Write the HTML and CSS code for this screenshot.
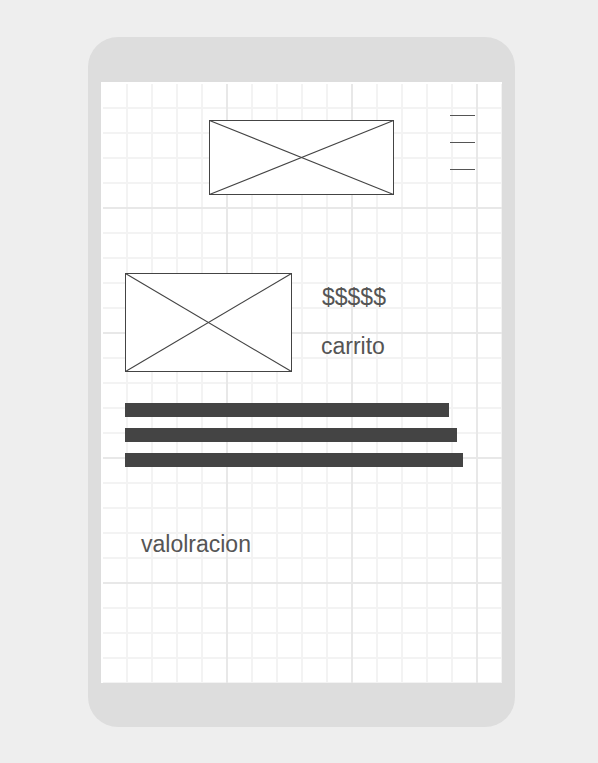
FILE: index.html
```html
<!DOCTYPE html>
<html lang="es">
<head>
<meta charset="utf-8">
<title>Wireframe</title>
<link rel="stylesheet" href="styles.css">
</head>
<body>
<div class="device">
  <div class="screen">
    <div class="header">
      <svg class="ph ph-top" width="185" height="75" viewBox="0 0 185 75">
        <rect x="0.5" y="0.5" width="184" height="74" fill="#fff" stroke="#444" stroke-width="1"/>
        <line x1="0.5" y1="0.5" x2="184.5" y2="74.5" stroke="#444" stroke-width="1.1"/>
        <line x1="0.5" y1="74.5" x2="184.5" y2="0.5" stroke="#444" stroke-width="1.1"/>
      </svg>
      <div class="menu">
        <span class="menu-line"></span>
        <span class="menu-line"></span>
        <span class="menu-line"></span>
      </div>
    </div>
    <div class="product">
      <svg class="ph ph-product" width="167" height="99" viewBox="0 0 167 99">
        <rect x="0.5" y="0.5" width="166" height="98" fill="#fff" stroke="#444" stroke-width="1"/>
        <line x1="0.5" y1="0.5" x2="166.5" y2="98.5" stroke="#444" stroke-width="1.1"/>
        <line x1="0.5" y1="98.5" x2="166.5" y2="0.5" stroke="#444" stroke-width="1.1"/>
      </svg>
      <div class="info">
        <div class="price">$$$$$</div>
        <div class="cart">carrito</div>
      </div>
    </div>
    <div class="bars">
      <div class="bar bar-1"></div>
      <div class="bar bar-2"></div>
      <div class="bar bar-3"></div>
    </div>
    <div class="rating">valolracion</div>
  </div>
</div>
</body>
</html>
```
FILE: styles.css
```css
html, body {
  margin: 0;
  padding: 0;
}
body {
  background: #eeeeee;
  font-family: "Liberation Sans", Arial, sans-serif;
  width: 598px;
  height: 763px;
  overflow: hidden;
}
.device {
  margin: 37px 0 0 88px;
  width: 427px;
  height: 690px;
  box-sizing: border-box;
  padding: 45px 13px 44px 13px;
  background: #dddddd;
  border-radius: 30px;
}
.screen {
  width: 401px;
  height: 601px;
  box-sizing: border-box;
  background-color: #ffffff;
  background-image:
    linear-gradient(to right, #e8e8e8 2px, transparent 2px),
    linear-gradient(to bottom, #e8e8e8 2px, transparent 2px),
    linear-gradient(to right, #f3f3f3 2px, transparent 2px),
    linear-gradient(to bottom, #f3f3f3 2px, transparent 2px);
  background-size: 125px 125px, 125px 125px, 25px 25px, 25px 25px;
  background-position: 0 0;
  box-shadow: inset 2px 2px 0 #ffffff;
  overflow: hidden;
}
.ph {
  display: block;
  flex: none;
}
.header {
  display: flex;
  align-items: flex-start;
  padding-top: 33px;
}
.ph-top {
  margin-left: 108px;
  margin-top: 5px;
}
.menu {
  margin-left: 56px;
  display: flex;
  flex-direction: column;
  gap: 26px;
}
.menu-line {
  display: block;
  width: 25px;
  height: 1px;
  background: #555555;
}
.product {
  display: flex;
  align-items: flex-start;
  margin-top: 78px;
  padding-left: 24px;
}
.info {
  margin-left: 29px;
  padding-top: 12px;
  display: flex;
  flex-direction: column;
  gap: 25px;
  color: #555555;
  font-size: 23px;
  line-height: 24px;
}
.price {
  padding-left: 1px;
}
.bars {
  margin-top: 31px;
  padding-left: 24px;
  display: flex;
  flex-direction: column;
  gap: 11px;
}
.bar {
  height: 14px;
  background: #444444;
}
.bar-1 { width: 324px; }
.bar-2 { width: 332px; }
.bar-3 { width: 338px; }
.rating {
  margin-top: 65px;
  margin-left: 40px;
  color: #555555;
  font-size: 23px;
  line-height: 24px;
}
```
